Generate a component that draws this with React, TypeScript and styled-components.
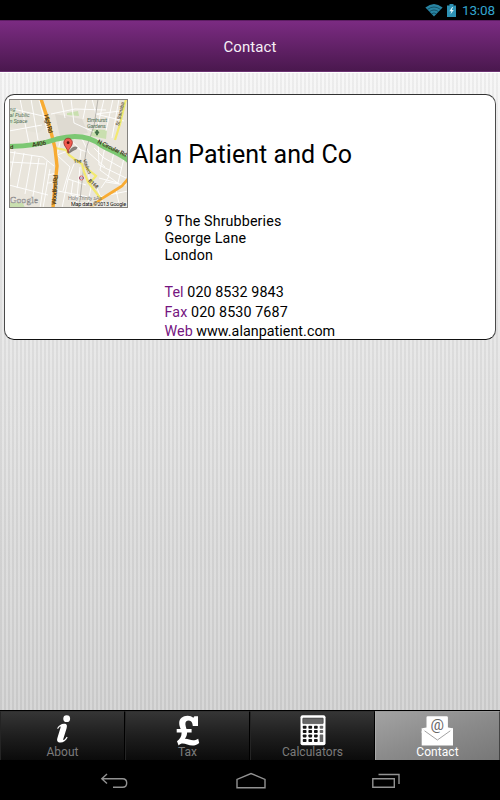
import React from 'react';
import styled, { createGlobalStyle } from 'styled-components';

const GlobalStyle = createGlobalStyle`
  * { box-sizing: border-box; }
  body { margin: 0; background: #000; font-family: Roboto, "Liberation Sans", sans-serif; }
`;

const Screen = styled.div`
  width: 500px;
  height: 800px;
  display: flex;
  flex-direction: column;
  overflow: hidden;
  background: #000;
`;

const StatusBar = styled.div`
  height: 20px;
  flex: none;
  display: flex;
  align-items: center;
  justify-content: flex-end;
  padding-right: 5px;
  color: #33a5cf;
`;

const Clock = styled.span`
  font-size: 13.5px;
  line-height: 20px;
  width: 33px;
  margin-left: 6px;
  white-space: nowrap;
  letter-spacing: -0.15px;
`;

const Header = styled.header`
  height: 52px;
  flex: none;
  display: flex;
  align-items: center;
  justify-content: center;
  border-top: 1px solid #5d1d63;
  border-bottom: 1px solid #6b3371;
  background: linear-gradient(#7b2b82, #4a184e);
  color: #f6eff6;
  font-size: 15px;
  letter-spacing: 0.1px;
  padding-top: 1px;
`;

const Content = styled.main`
  flex: 1;
  padding: 22px 4px 0 4px;
  border-top: 1px solid #fff;
  background:
    repeating-linear-gradient(90deg, rgba(0,0,0,0.04) 0 2px, rgba(255,255,255,0.12) 2px 4px),
    linear-gradient(#f6f6f6 0, #e5e5e5 43%, #d1d1d1 100%);
`;

const Card = styled.section`
  height: 246px;
  margin-top: -1px;
  border: 1px solid #111;
  border-left-color: #4a4a4a;
  border-right-color: #4a4a4a;
  border-top-color: #333;
  border-radius: 10px;
  background: #fff;
  padding: 3px 0 0 4px;
  color: #000;
`;

const CardHead = styled.div`
  display: flex;
  height: 110px;
  align-items: center;
  gap: 4px;
`;

const MapSvg = styled.svg`
  display: block;
  flex: none;
  width: 119px;
  height: 109px;
`;

const Name = styled.h1`
  margin: 0;
  padding-top: 3px;
  font-weight: 400;
  font-size: 25px;
  line-height: 30px;
  letter-spacing: 0.05px;
  white-space: nowrap;
`;

const Details = styled.div`
  margin: 5px 0 0 155.5px;
  font-size: 14.3px;
`;

const AddressLine = styled.div`
  line-height: 17px;
  height: 17px;
  letter-spacing: 0.12px;
`;

const Links = styled.div`
  margin-top: 19px;
`;

const LinkRow = styled.div<{ $spacing: number }>`
  line-height: 19.5px;
  height: 19.5px;
  letter-spacing: ${(p) => p.$spacing}px;
  white-space: nowrap;
`;

const Label = styled.span`
  color: #75157f;
`;

const TabBar = styled.nav`
  height: 50px;
  flex: none;
  display: grid;
  grid-template-columns: repeat(4, 1fr);
  border-top: 1px solid #000;
`;

const Tab = styled.div<{ $active?: boolean }>`
  display: flex;
  flex-direction: column;
  align-items: center;
  border-right: 1px solid ${(p) => (p.$active ? '#444' : '#000')};
  border-left: 1px solid ${(p) => (p.$active ? '#aaa' : '#242424')};
  border-top: 1px solid ${(p) => (p.$active ? '#999' : '#303030')};
  background: ${(p) => (p.$active
    ? 'linear-gradient(160deg, #a3a3a3, #8b8b8b 50%, #777)'
    : 'linear-gradient(#353535, #1e1e1e 50%, #0b0b0b)')};
  color: ${(p) => (p.$active ? '#fff' : '#7c7c7c')};
  font-size: 12px;
  line-height: 14px;
  letter-spacing: 0.05px;
`;

const TabIcon = styled.svg`
  display: block;
  width: 34px;
  height: 34px;
  margin: 1px 0 -2px;
  flex: none;
`;

const NavBar = styled.div`
  height: 40px;
  flex: none;
  display: flex;
  align-items: center;
  justify-content: space-between;
  padding: 1px 99px 0 100px;
`;

const NavIcon = styled.svg`
  display: block;
  width: 30px;
  height: 18px;
  fill: none;
  stroke: #929292;
  stroke-width: 1.4;
`;

const LocationMap = () => (
  <MapSvg viewBox="9 98 119 109" fontFamily="Roboto, sans-serif">
    <rect x="9" y="98" width="119" height="109" fill="#e9e5dc" />
    <g fill="#dedad1">
      <path d="M55 113L82 118L88 132L60 136Z" />
      <path d="M9 98H38L46 126L38 132L9 126Z" fill="#e5e2d8" />
    </g>
    <g fill="#c9dfaf">
      <path d="M67 112L78 110L79 115L67 114Z" />
      <path d="M92 128L107 129L106 138L91 135Z" />
      <path d="M9 201L23 202L25 207H9Z" />
      <path d="M10 110L16 108L17 122L9 124Z" fill="#dfe8d0" />
    </g>
    <g fill="none" stroke="#fff" strokeWidth="0.9">
      <path d="M9 107L47 116M20 98L29 142M31 98L38 139M9 130L42 124M39 98L48 132M51 113L75 108L106 109M61 98L65 117M71 98L74 122L94 131M87 98L83 118M92 98L96 113L124 120M104 98L97 128M113 98L106 130M119 98L112 137M96 113L120 110M9 151L43 156L54 165M9 161L45 163M15 150L9 181M24 152L17 187M32 154L25 193M39 157L32 201M47 160L40 207M9 184L48 194M50 168L43 207M48 174L57 172M48 182L56 181M61 137L57 154L70 166L63 190M65 134L81 149L80 158M57 154L76 147L87 151M82 138L89 152L105 166M74 163L68 178L86 184M68 178L62 207M80 166L76 207M87 166L91 186L87 207M94 147L104 157L122 167M98 138L99 164L126 177M105 146L100 169L119 183M114 151L108 177L101 187M124 157L118 182L99 177M58 190L94 197L128 190M73 180L71 194L82 197M97 187L105 207M116 189L120 207M106 181L126 184" />
    </g>
    <path d="M98 98L94 125L87 145L84 164L79 207" fill="none" stroke="#aaa7a2" strokeWidth="0.8" />
    <path d="M115 139L120 123L126 98M55 147L66 149L69 154L77 160L82 163L84 171L88 181L101 198M85 166L96 175L90 182" fill="none" stroke="#f3e970" strokeWidth="2.2" />
    <path d="M41 98L48 119L55 147L57 165L55 184L53 207" fill="none" stroke="#f8ab32" strokeWidth="3.4" />
    <path d="M90 207L101 198L114 190L122 185L128 178" fill="none" stroke="#f8ab32" strokeWidth="2.7" />
    <path d="M9 145.5C31 145 43 143 57 138C79 132 92 137 101 144C113 151 121 153 129 160" fill="none" stroke="#7cc873" strokeWidth="5" />
    <g fontSize="5.6" fill="#55735b" fontStyle="italic">
      <text x="9.5" y="110">ng</text>
      <text x="9.5" y="116" textLength="20">al Public</text>
      <text x="9.5" y="121.8" textLength="18">n Space</text>
      <text x="87" y="121" fontStyle="normal" textLength="20">Elmhurst</text>
      <text x="87" y="127" fontStyle="normal" textLength="19">Gardens</text>
      <text x="68" y="199" fill="#86827d" fontStyle="normal" textLength="34">Holy Trinity sAs</text>
    </g>
    <path d="M97 129L99 132H97.5V134H96.5V132H95Z" fill="#43724a" stroke="#43724a" />
    <g fontSize="6.3" fill="#3e341b" fontWeight="500">
      <text x="10" y="147.5" fontSize="6" textLength="4">d</text>
      <text transform="translate(32.5 146) rotate(-9)" textLength="14">A406</text>
      <text transform="translate(44 114) rotate(76)" textLength="19">High Rd</text>
      <text transform="translate(56 204) rotate(-86)" textLength="30">Woodford Rd</text>
      <text transform="translate(97 142) rotate(26)" textLength="32" fontSize="6">N Circular Rd</text>
      <text transform="translate(119 125) rotate(-77)" fontSize="5" textLength="24" fontWeight="400">St. Barnaba</text>
      <text transform="translate(74 162) rotate(-5)" fontSize="4.5">The</text>
      <text transform="translate(83 159) rotate(70)" fontSize="4.5">Viaduct</text>
      <text transform="translate(88 180) rotate(43)" fontSize="5">B168</text>
    </g>
    <circle cx="81.4" cy="177" r="2" fill="#fff" stroke="#d3575b" />
    <path d="M79 177H84" stroke="#564f91" strokeWidth="0.8" />
    <path d="M68 153C70 147 74 144 77 146C79 148 74 149 70 152Z" fill="#4b4640" opacity="0.65" />
    <path d="M68.1 152C67.7 147 63.8 145.5 63.8 141.5A4.3 4.3 0 0 1 72.4 141.5C72.4 145.5 68.5 147 68.1 152Z" fill="#f05a4f" stroke="#8c2520" strokeWidth="0.7" />
    <circle cx="68.1" cy="141.7" r="1.4" fill="#52110e" />
    <text x="10" y="202" fontFamily="Liberation Serif, serif" fontSize="9" fill="#f5f3ef" stroke="#898989" strokeWidth="0.45" textLength="28">Google</text>
    <path d="M70 201H128V207H70Z" fill="#f3f0eb" opacity="0.65" />
    <text x="71" y="205.2" fontSize="5.4" fill="#111" textLength="55">Map data ©2013 Google</text>
    <rect x="9.5" y="98.5" width="118" height="108" fill="none" stroke="#84827e" />
  </MapSvg>
);

const InfoIcon = () => (
  <TabIcon viewBox="0 0 34 34" fill="#fff">
    <circle cx="20.7" cy="5.7" r="3.4" />
    <path d="M11.1 15.2C13 12.2 15.2 10.7 18 10.7C21.2 10.7 21.3 12.8 20.6 15.2L17.3 26.1C17 27.2 17.5 27.4 18.3 26.7C19.3 25.8 20 24.8 20.6 23.8L21.7 24.5C19.6 28 17.5 29.4 14.5 29.4C11.3 29.4 10.6 27.5 11.4 24.9L14.5 14.7C14.9 13.3 14.2 13.3 13.5 14C12.9 14.6 12.4 15.3 12 15.9Z" />
  </TabIcon>
);

const PoundIcon = () => (
  <TabIcon viewBox="0 0 34 34" fill="#fff">
    <path d="M27 4V13H21.8C21.6 9.7 20.3 7.6 17.9 7.6C15.3 7.6 14.2 9.2 14.4 11.4C14.5 13 15.1 14.5 15.5 16H20.6V19.4H16.1C16.1 22 15.3 24 13.8 25.8C16.6 25.5 19.4 27.2 22.2 27.2C23.8 27.2 25.2 26.7 27.2 25.7L28.2 29.9C25.8 31.9 23.9 32.6 21.3 32.6C17.8 32.6 14.5 30.6 11.7 30.6C10.2 30.6 9 31.2 7.6 32.4L6 28.2C9 26.1 10.7 23.1 10.6 19.4H5.7V16H9.7C8.8 13.9 8.2 12.2 8.2 10.1C8.2 5.5 11.7 2.7 16.6 2.7C19.1 2.7 20.7 3.5 22.4 4.7L23.4 3.2H27Z" />
  </TabIcon>
);

const CalculatorIcon = () => (
  <TabIcon viewBox="0 0 34 34">
    <rect x="4.5" y="2.3" width="25" height="30" rx="2" fill="#fff" />
    <rect x="6.8" y="5.1" width="20.4" height="5.5" rx="0.5" fill="#666" stroke="#333" strokeWidth="0.6" />
    {[12.8, 17, 21.4, 26].map((y) =>
      [6.8, 12.4, 18].map((x) => <rect key={`${x}-${y}`} x={x} y={y} width="3.7" height="3" rx="0.8" fill="#151515" />)
    )}
    {[12.8, 17].map((y) => <rect key={y} x="23.7" y={y} width="3.5" height="3" rx="0.8" fill="#666" />)}
    <rect x="23.7" y="21.4" width="3.5" height="7.6" rx="0.6" fill="#666" />
  </TabIcon>
);

const MailIcon = () => (
  <TabIcon viewBox="0 0 34 34">
    <path d="M5.5 4.4Q5.5 3.2 6.7 3.2H25.7Q26.9 3.2 26.9 4.4V14.5L32 18V32.5H0.7V18L5.5 14.5Z" fill="#fff" />
    <path d="M1 15.2L5.5 19V14.5ZM31.7 15.2L26.9 19V14.5Z" fill="#fff" />
    <path d="M0.7 14.7V20L5.5 19ZM32 14.7V20L26.9 19Z" fill="#fff" />
    <path d="M3.5 17.8L16.4 27L29.3 17.8" fill="none" stroke="#999" strokeWidth="0.9" />
    <text x="16.3" y="16.6" textAnchor="middle" fontFamily="Roboto, sans-serif" fontSize="15" fill="#666">@</text>
  </TabIcon>
);

const WifiIcon = () => (
  <svg width="18" height="14" viewBox="0 0 18 14">
    <path d="M0.4 4.4Q9 -2.6 17.6 4.4L9 13.5Z" fill="#2884a3" />
    <path d="M2.5 6.4Q9 1.6 15.5 6.4M4.5 8.6Q9 5.4 13.5 8.6M6.6 10.8Q9 9 11.4 10.8" stroke="#0b3c4e" strokeWidth="0.7" fill="none" />
  </svg>
);

const BatteryGlyph = styled.svg`
  width: 9px;
  height: 13px;
  margin-left: 4px;
`;

const links = [
  { label: 'Tel', value: '020 8532 9843', spacing: 0.08 },
  { label: 'Fax', value: '020 8530 7687', spacing: 0.1 },
  { label: 'Web', value: 'www.alanpatient.com', spacing: 0.04 },
];

export default function App() {
  return (
    <Screen>
      <GlobalStyle />
      <StatusBar>
        <WifiIcon />
        <BatteryGlyph viewBox="0 0 9 13">
          <path d="M2.5 0H6.5V1.4H9V13H0V1.4H2.5Z" fill="#2d91b4" />
          <path d="M5.2 3L2.4 7.2H4.4L3.4 10.5L6.8 6H4.8L6 3Z" fill="#e5f6fc" />
        </BatteryGlyph>
        <Clock>13:08</Clock>
      </StatusBar>
      <Header>Contact</Header>
      <Content>
        <Card>
          <CardHead>
            <LocationMap />
            <Name>Alan Patient and Co</Name>
          </CardHead>
          <Details>
            <AddressLine>9 The Shrubberies</AddressLine>
            <AddressLine>George Lane</AddressLine>
            <AddressLine>London</AddressLine>
            <Links>
              {links.map((l) => (
                <LinkRow key={l.label} $spacing={l.spacing}>
                  <Label>{l.label}</Label> {l.value}
                </LinkRow>
              ))}
            </Links>
          </Details>
        </Card>
      </Content>
      <TabBar>
        <Tab><InfoIcon />About</Tab>
        <Tab><PoundIcon />Tax</Tab>
        <Tab><CalculatorIcon />Calculators</Tab>
        <Tab $active><MailIcon />Contact</Tab>
      </TabBar>
      <NavBar>
        <NavIcon viewBox="0 0 30 18">
          <path d="M7 2L1.8 6.8L7 11.5M2.2 6.8H22.5Q26.7 6.8 26.7 11T22.5 15.3H13" />
        </NavIcon>
        <NavIcon viewBox="0 0 30 18">
          <path d="M1 15.8V7.4L15 1.5L29 7.4V15.8Z" />
        </NavIcon>
        <NavIcon viewBox="0 0 30 18">
          <path d="M1.8 6.7H23.3V15.3H1.8ZM7.5 2.5H28V12" />
        </NavIcon>
      </NavBar>
    </Screen>
  );
}
